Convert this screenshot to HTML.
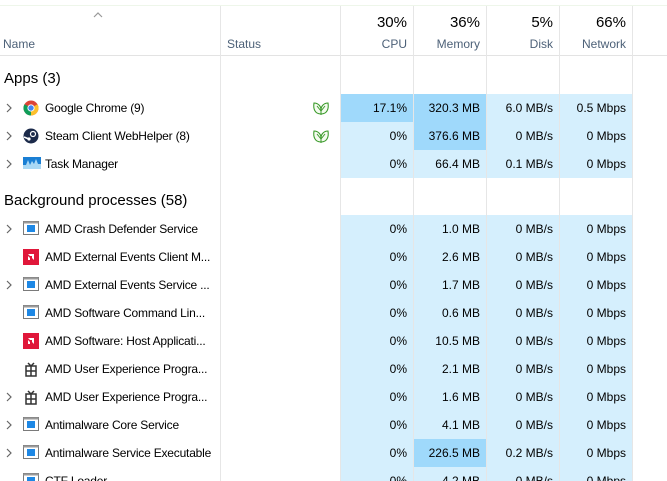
<!DOCTYPE html>
<html><head><style>
*{margin:0;padding:0;box-sizing:border-box}
html,body{width:667px;height:481px;overflow:hidden}
body{background:#fff;font-family:"Liberation Sans",sans-serif;font-size:12px;color:#000;position:relative}
.a{position:absolute}
.vl{position:absolute;top:6px;width:1px;height:475px;background:#e6e6e6}
.c{position:absolute;height:28px;line-height:28px;text-align:right;padding-right:6px;white-space:nowrap}
.l{background:#d5effd}
.d{background:#9fd9fb}
.n{position:absolute;left:45px;height:28px;line-height:28px;white-space:nowrap;letter-spacing:-0.2px}
.ch{position:absolute;left:5px;line-height:0}
.hp{position:absolute;font-size:15px;text-align:right;top:14px}
.hl{position:absolute;font-size:12px;color:#4d6178;text-align:right;top:37px}
</style></head><body>
<div class="a" style="left:0;top:5px;width:667px;height:1px;background:#eef6ea"></div>
<div class="a" style="left:0;top:55px;width:667px;height:1px;background:#e3e3e3"></div>
<div class="a" style="left:93px;top:12px;line-height:0"><svg width="10" height="6" viewBox="0 0 10 6"><path d="M1 5 L5 1 L9 5" fill="none" stroke="#999" stroke-width="1.2"/></svg></div>
<div class="a" style="left:3px;top:37px;color:#4d6178">Name</div>
<div class="a" style="left:227px;top:37px;color:#4d6178">Status</div>
<div class="hp" style="left:341px;width:66px">30%</div><div class="hl" style="left:341px;width:66px">CPU</div>
<div class="hp" style="left:414px;width:66px">36%</div><div class="hl" style="left:414px;width:66px">Memory</div>
<div class="hp" style="left:487px;width:66px">5%</div><div class="hl" style="left:487px;width:66px">Disk</div>
<div class="hp" style="left:560px;width:66px">66%</div><div class="hl" style="left:560px;width:66px">Network</div>
<div class="a" style="left:4px;top:70px;font-size:15px">Apps (3)</div>
<div class="a" style="left:4px;top:192px;font-size:15px">Background processes (58)</div>

<div id="cells"></div>
<script>
var rows=[
[94,">","chrome","Google Chrome (9)",1,["17.1%","320.3 MB","6.0 MB/s","0.5 Mbps"],[1,1,0,0]],
[122,">","steam","Steam Client WebHelper (8)",1,["0%","376.6 MB","0 MB/s","0 Mbps"],[0,1,0,0]],
[150,">","tm","Task Manager",0,["0%","66.4 MB","0.1 MB/s","0 Mbps"],[0,0,0,0]],
[215,">","svc","AMD Crash Defender Service",0,["0%","1.0 MB","0 MB/s","0 Mbps"],[0,0,0,0]],
[243,"","amd","AMD External Events Client M...",0,["0%","2.6 MB","0 MB/s","0 Mbps"],[0,0,0,0]],
[271,">","svc","AMD External Events Service ...",0,["0%","1.7 MB","0 MB/s","0 Mbps"],[0,0,0,0]],
[299,"","svc","AMD Software Command Lin...",0,["0%","0.6 MB","0 MB/s","0 Mbps"],[0,0,0,0]],
[327,"","amd","AMD Software: Host Applicati...",0,["0%","10.5 MB","0 MB/s","0 Mbps"],[0,0,0,0]],
[355,"","gift","AMD User Experience Progra...",0,["0%","2.1 MB","0 MB/s","0 Mbps"],[0,0,0,0]],
[383,">","gift","AMD User Experience Progra...",0,["0%","1.6 MB","0 MB/s","0 Mbps"],[0,0,0,0]],
[411,">","svc","Antimalware Core Service",0,["0%","4.1 MB","0 MB/s","0 Mbps"],[0,0,0,0]],
[439,">","svc","Antimalware Service Executable",0,["0%","226.5 MB","0.2 MB/s","0 Mbps"],[0,1,0,0]],
[467,"","svc","CTF Loader",0,["0%","4.2 MB","0 MB/s","0 Mbps"],[0,0,0,0]]
];
var icons={
chrome:'<svg width="16" height="16" viewBox="0 0 16 16"><circle cx="8" cy="8" r="7.5" fill="#db4437"/><path d="M8 8 L1.5 4.2 A7.5 7.5 0 0 0 8 15.5Z" fill="#0f9d58"/><path d="M8 8 L8 15.5 A7.5 7.5 0 0 0 14.5 4.2Z" fill="#fbc02d"/><circle cx="8" cy="8" r="3.6" fill="#fff"/><circle cx="8" cy="8" r="2.7" fill="#4285f4"/></svg>',
steam:'<svg width="16" height="16" viewBox="0 0 16 16"><circle cx="8" cy="8" r="7.5" fill="#1b2a4a"/><circle cx="10" cy="6" r="2.5" fill="none" stroke="#fff" stroke-width="1.2"/><path d="M1 9 L7 11.5" stroke="#fff" stroke-width="1.6"/><circle cx="6" cy="11" r="1.6" fill="#fff"/></svg>',
tm:'<svg width="18" height="14" viewBox="0 0 18 14"><rect x="0" y="1" width="18" height="12" fill="#a9d8f5"/><path d="M0 9 L3 9 L5 4 L7 9 L9 5 L11 8 L13 3 L15 8 L18 8 L18 1 L0 1Z" fill="#1a7fd4"/></svg>',
svc:'<svg width="16" height="14" viewBox="0 0 16 14"><rect x="0.5" y="0.5" width="15" height="13" fill="#fff" stroke="#7a7a7a"/><rect x="0.5" y="0.5" width="15" height="2" fill="#9a9a9a"/><rect x="4" y="4" width="8" height="7" fill="#1e88e5"/></svg>',
amd:'<svg width="16" height="16" viewBox="0 0 16 16"><rect width="16" height="16" fill="#e0173a"/><path d="M5 5 L11 5 L11 11 L9 9 L9 7 L7 7Z M5 7 L7 9 L7 11 L5 11Z" fill="#fff"/></svg>',
gift:'<svg width="16" height="16" viewBox="0 0 16 16"><rect x="3" y="5" width="10" height="10" fill="none" stroke="#333" stroke-width="1.5"/><path d="M3 10 H13 M8 5 V15" stroke="#333" stroke-width="1.5"/><path d="M5 2 L8 5 L11 2" fill="none" stroke="#333" stroke-width="1.5"/></svg>'
};
var leaf='<svg width="18" height="16" viewBox="0 0 18 16"><path d="M9 14 C3 14 1 9 2 3 C6 3 9 6 9 10 C9 6 12 3 16 3 C17 9 15 14 9 14Z" fill="#f4fbef" stroke="#3a9a2a" stroke-width="1.1"/><path d="M9 15 V9 M9 11 L5 6 M9 11 L13 6" stroke="#3a9a2a" stroke-width="1" fill="none"/></svg>';
var chev='<svg width="8" height="10" viewBox="0 0 8 10"><path d="M2 1 L6 5 L2 9" fill="none" stroke="#666" stroke-width="1.2"/></svg>';
var h='',xs=[341,414,487,560],ws=[72,72,72,72];
rows.forEach(function(r){
 var y=r[0];
 if(r[1])h+='<div class="ch" style="top:'+(y+9)+'px">'+chev+'</div>';
 h+='<div class="a" style="left:23px;top:'+(y+6)+'px;line-height:0">'+icons[r[2]]+'</div>';
 h+='<div class="n" style="top:'+y+'px">'+r[3]+'</div>';
 if(r[4])h+='<div class="a" style="left:312px;top:'+(y+6)+'px;line-height:0">'+leaf+'</div>';
 for(var i=0;i<4;i++)h+='<div class="c '+(r[6][i]?'d':'l')+'" style="left:'+xs[i]+'px;width:'+ws[i]+'px;top:'+y+'px">'+r[5][i]+'</div>';
});
document.getElementById('cells').innerHTML=h;
</script>
<div class="vl" style="left:220px"></div>
<div class="vl" style="left:340px"></div>
<div class="vl" style="left:413px"></div>
<div class="vl" style="left:486px"></div>
<div class="vl" style="left:559px"></div>
<div class="vl" style="left:632px"></div>
</body></html>
